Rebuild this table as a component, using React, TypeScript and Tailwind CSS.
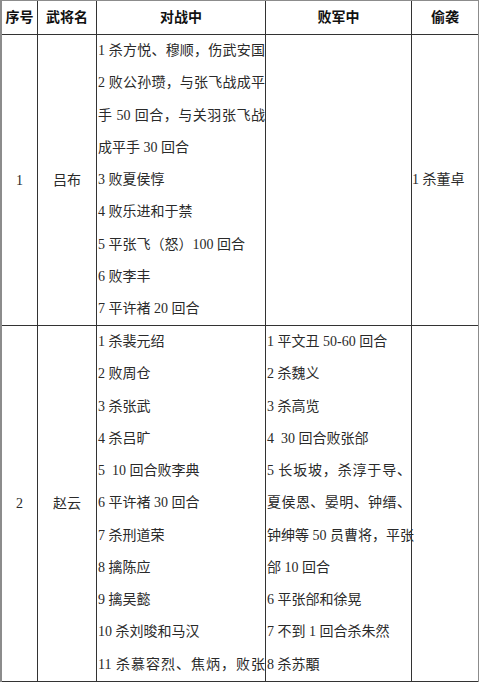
import React from 'react'

type Line = { text: string; justify?: boolean }

const font = { fontFamily: '"Liberation Serif", "Noto Sans CJK SC", serif' }

const rows: {
  no: string
  name: string
  fight: Line[]
  rout: Line[]
  sneak: Line[]
  height: string
}[] = [
  {
    no: '1',
    name: '吕布',
    height: 'h-[291px]',
    fight: [
      { text: '1 杀方悦、穆顺，伤武安国', justify: true },
      { text: '2 败公孙瓒，与张飞战成平', justify: true },
      { text: '手 50 回合，与关羽张飞战', justify: true },
      { text: '成平手 30 回合' },
      { text: '3 败夏侯惇' },
      { text: '4 败乐进和于禁' },
      { text: '5 平张飞（怒）100 回合' },
      { text: '6 败李丰' },
      { text: '7 平许褚 20 回合' },
    ],
    rout: [],
    sneak: [{ text: '1 杀董卓' }],
  },
  {
    no: '2',
    name: '赵云',
    height: 'h-[356px]',
    fight: [
      { text: '1 杀裴元绍' },
      { text: '2 败周仓' },
      { text: '3 杀张武' },
      { text: '4 杀吕旷' },
      { text: '5\u00a0\u00a010 回合败李典' },
      { text: '6 平许褚 30 回合' },
      { text: '7 杀刑道荣' },
      { text: '8 擒陈应' },
      { text: '9 擒吴懿' },
      { text: '10 杀刘晙和马汉' },
      { text: '11 杀慕容烈、焦炳，败张', justify: true },
    ],
    rout: [
      { text: '1 平文丑 50-60 回合' },
      { text: '2 杀魏义' },
      { text: '3 杀高览' },
      { text: '4\u00a0\u00a030 回合败张郃' },
      { text: '5 长坂坡，杀淳于导、', justify: true },
      { text: '夏侯恩、晏明、钟缙、', justify: true },
      { text: '钟绅等 50 员曹将，平张', justify: true },
      { text: '郃 10 回合' },
      { text: '6 平张郃和徐晃' },
      { text: '7 不到 1 回合杀朱然' },
      { text: '8 杀苏顒' },
    ],
    sneak: [],
  },
]

function Lines({ lines }: { lines: Line[] }) {
  return (
    <>
      {lines.map((l, i) => (
        <div
          key={i}
          className={`h-[32.25px] leading-[32.25px] whitespace-nowrap ${l.justify ? 'text-justify [text-align-last:justify]' : ''}`}
        >
          {l.text}
        </div>
      ))}
    </>
  )
}

export default function App() {
  return (
    <div className="w-[479px] h-[684px] bg-white overflow-hidden text-[14px] text-[#2a2a2a]" style={font}>
      <div className="border-l-2 border-t border-r border-[#8c8c8c]">
        {/* header */}
        <div className="flex h-[34px] border-b border-[#333] font-bold text-[#111]">
          <div className="w-[36px] border-r border-[#333] flex items-center justify-center">序号</div>
          <div className="w-[59px] border-r border-[#333] flex items-center justify-center">武将名</div>
          <div className="w-[169px] border-r border-[#333] flex items-center justify-center">对战中</div>
          <div className="w-[146px] border-r border-[#333] flex items-center justify-center">败军中</div>
          <div className="w-[66px] flex items-center justify-center">偷袭</div>
        </div>

        {rows.map((r) => (
          <div key={r.no} className={`flex ${r.height} border-b border-[#333]`}>
            <div className="w-[36px] border-r border-[#333] flex items-center justify-center">{r.no}</div>
            <div className="w-[59px] border-r border-[#333] flex items-center justify-center">{r.name}</div>
            <div className="w-[169px] border-r border-[#333] pl-px flex flex-col">
              <Lines lines={r.fight} />
            </div>
            <div className="w-[146px] border-r border-[#333] pl-px flex flex-col">
              <Lines lines={r.rout} />
            </div>
            <div className="w-[66px] flex flex-col justify-center">
              <Lines lines={r.sneak} />
            </div>
          </div>
        ))}
      </div>
    </div>
  )
}
